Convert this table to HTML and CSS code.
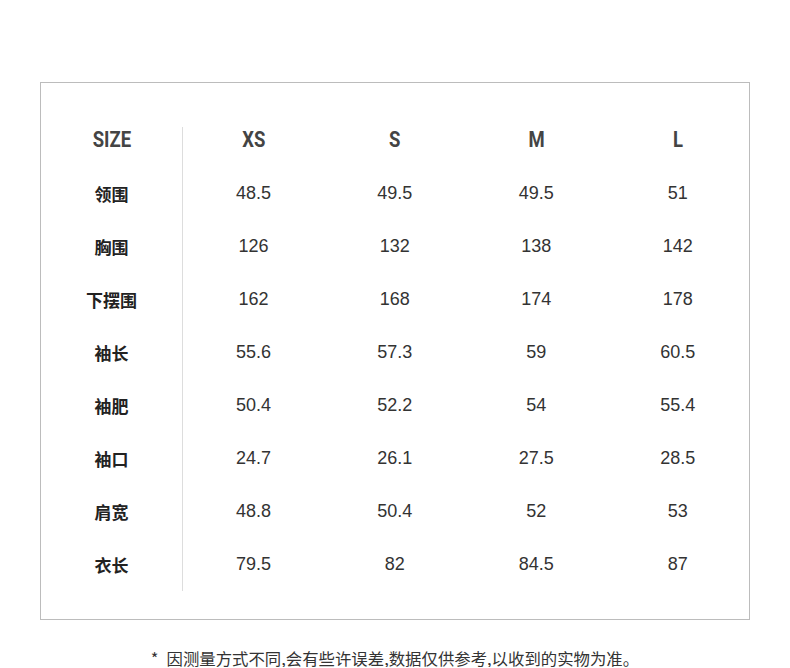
FILE: index.html
```html
<!DOCTYPE html>
<html lang="zh-CN">
<head>
<meta charset="utf-8">
<title>尺码表</title>
<link rel="stylesheet" href="styles.css">
</head>
<body>
<div class="page">
  <div class="size-box">
    <table class="size-table">
      <thead>
        <tr class="head-row">
          <th class="label-cell"><span class="cond">SIZE</span></th>
          <th><span class="cond">XS</span></th>
          <th><span class="cond">S</span></th>
          <th><span class="cond">M</span></th>
          <th><span class="cond">L</span></th>
        </tr>
      </thead>
      <tbody>
        <tr><th class="label-cell">领围</th><td>48.5</td><td>49.5</td><td>49.5</td><td>51</td></tr>
        <tr><th class="label-cell">胸围</th><td>126</td><td>132</td><td>138</td><td>142</td></tr>
        <tr><th class="label-cell">下摆围</th><td>162</td><td>168</td><td>174</td><td>178</td></tr>
        <tr><th class="label-cell">袖长</th><td>55.6</td><td>57.3</td><td>59</td><td>60.5</td></tr>
        <tr><th class="label-cell">袖肥</th><td>50.4</td><td>52.2</td><td>54</td><td>55.4</td></tr>
        <tr><th class="label-cell">袖口</th><td>24.7</td><td>26.1</td><td>27.5</td><td>28.5</td></tr>
        <tr><th class="label-cell">肩宽</th><td>48.8</td><td>50.4</td><td>52</td><td>53</td></tr>
        <tr><th class="label-cell">衣长</th><td>79.5</td><td>82</td><td>84.5</td><td>87</td></tr>
      </tbody>
    </table>
  </div>
  <p class="note"><span class="star">*</span>因测量方式不同,会有些许误差,数据仅供参考,以收到的实物为准。</p>
</div>
</body>
</html>
```

FILE: styles.css
```css
html, body {
  margin: 0;
  padding: 0;
  background: #ffffff;
}

.page {
  padding: 82px 40px 0;
  font-family: "Liberation Sans", Arial, "Noto Sans CJK SC", sans-serif;
}

.size-box {
  border: 1px solid #bcbcbc;
  padding: 44px 0 28px;
}

.size-table {
  width: 100%;
  table-layout: fixed;
  border-collapse: collapse;
  border-spacing: 0;
}

.size-table th,
.size-table td {
  padding: 0;
  text-align: center;
  vertical-align: middle;
}

.head-row th {
  height: 40px;
  vertical-align: top;
}

.cond {
  display: inline-block;
  font-family: Roboto, "Liberation Sans", sans-serif;
  font-weight: 700;
  font-size: 22px;
  line-height: 26px;
  color: #444444;
  transform: scaleX(0.84);
}

tbody tr {
  height: 53px;
}

tbody th {
  font-family: "Noto Sans CJK SC", sans-serif;
  font-weight: 700;
  font-size: 17px;
  color: #222222;
}

tbody td {
  font-size: 18px;
  color: #333333;
}

.label-cell {
  border-right: 1px solid #dddddd;
}

.note {
  margin: 29px 0 0;
  text-align: center;
  font-family: "Noto Sans CJK SC", sans-serif;
  font-size: 16.4px;
  line-height: 18px;
  color: #333333;
}

.star {
  margin-right: 8px;
}
```
